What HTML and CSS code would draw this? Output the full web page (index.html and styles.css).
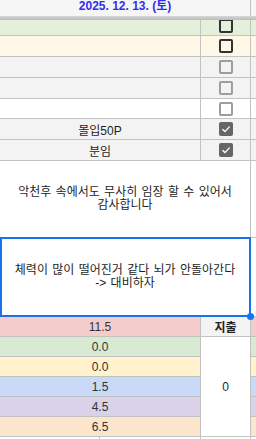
FILE: index.html
```html
<!DOCTYPE html>
<html lang="ko">

<head>
    <meta charset="UTF-8">
    <meta name="viewport" content="width=device-width, initial-scale=1.0">
    <title>Sheet</title>
    <link rel="stylesheet" href="styles.css">
</head>

<body>
    <div class="sheet">
        <!-- frozen header -->
        <div class="cell date">2025. 12. 13. (토)</div>
        <div class="cell head-edge"></div>
        <div class="freeze"></div>

        <!-- checklist rows -->
        <div class="cell green cut"></div>
        <div class="cell green cut box-cell"><span class="box dark"></span></div>
        <div class="cell green cut edge"></div>

        <div class="cell yellow"></div>
        <div class="cell yellow box-cell"><span class="box dark"></span></div>
        <div class="cell yellow edge"></div>

        <div class="cell grey"></div>
        <div class="cell grey box-cell"><span class="box"></span></div>
        <div class="cell grey edge"></div>

        <div class="cell grey"></div>
        <div class="cell grey box-cell"><span class="box"></span></div>
        <div class="cell grey edge"></div>

        <div class="cell"></div>
        <div class="cell box-cell"><span class="box"></span></div>
        <div class="cell edge"></div>

        <div class="cell grey">몰입50P</div>
        <div class="cell grey box-cell">
            <span class="box checked">
                <svg width="10" height="10" viewBox="0 0 10 10"><path d="M1.5 5.2 L4 7.6 L8.6 2.6" fill="none" stroke="#fff" stroke-width="1.4"/></svg>
            </span>
        </div>
        <div class="cell grey edge"></div>

        <div class="cell grey">분임</div>
        <div class="cell grey box-cell">
            <span class="box checked">
                <svg width="10" height="10" viewBox="0 0 10 10"><path d="M1.5 5.2 L4 7.6 L8.6 2.6" fill="none" stroke="#fff" stroke-width="1.4"/></svg>
            </span>
        </div>
        <div class="cell grey edge"></div>

        <!-- notes -->
        <div class="cell note">악천후 속에서도 무사히 임장 할 수 있어서<br>감사합니다</div>
        <div class="cell edge"></div>

        <div class="cell note selected">체력이 많이 떨어진거 같다 뇌가 안돌아간다<br>-&gt; 대비하자</div>
        <div class="cell edge"></div>

        <!-- totals -->
        <div class="cell red">11.5</div>
        <div class="cell label">지출</div>
        <div class="cell red edge"></div>

        <div class="cell mint">0.0</div>
        <div class="cell total">0</div>
        <div class="cell mint edge"></div>

        <div class="cell cream">0.0</div>
        <div class="cell cream edge"></div>

        <div class="cell blue">1.5</div>
        <div class="cell blue edge"></div>

        <div class="cell purple">4.5</div>
        <div class="cell purple edge"></div>

        <div class="cell peach">6.5</div>
        <div class="cell peach edge"></div>

        <div class="cell half"></div>
        <div class="cell half"></div>
        <div class="cell half"></div>
        <div class="cell edge"></div>
    </div>
</body>

</html>
```

FILE: styles.css
```css
html, body {
    margin: 0;
    padding: 0;
    background: white;
    overflow: hidden;
}

body {
    font-family: "Liberation Sans", "Noto Sans CJK KR", sans-serif;
    font-size: 12px;
    color: #1e1e1e;
    height: 439px;
}

.sheet {
    display: grid;
    grid-template-columns: 100px 101px 50px 1fr;
    grid-template-rows: 16px 4px 16px 21px 21px 21px 20px 21px 21px 77px 79px repeat(6, 20px) 20px;
}

.cell {
    grid-column: span 2;
    box-sizing: border-box;
    border-right: 1px solid #c2c2c2;
    border-bottom: 1px solid #c2c2c2;
    display: flex;
    align-items: center;
    justify-content: center;
    overflow: hidden;
    white-space: nowrap;
}

.cell.edge,
.cell.box-cell,
.cell.label,
.cell.half,
.cell.head-edge {
    grid-column: span 1;
}

.cell.edge {
    border-right: none;
}

/* frozen header */
.date {
    grid-column: 1 / 4;
    background: #f6f6f6;
    border-bottom: none;
    color: #2f2ff0;
    font-weight: bold;
    align-items: flex-start;
    line-height: 13px;
}

.cell.head-edge {
    background: #f6f6f6;
    border-bottom: none;
    border-right: none;
}

.freeze {
    grid-column: 1 / -1;
    background: linear-gradient(#d6d6d6, #bcbcbc);
}

/* first row sits half under the frozen bar */
.cut {
    align-items: flex-end;
    padding-bottom: 2px;
}

/* row colours */
.green { background: #e4efdc; }
.yellow { background: #fff8e6; }
.grey { background: #f3f3f3; }
.red { background: #f4cccc; }
.mint { background: #d9ead3; }
.cream { background: #fff2cc; }
.blue { background: #c9daf8; }
.purple { background: #d9d2e9; }
.peach { background: #fce5cd; }

/* checkboxes */
.box {
    width: 14px;
    height: 14px;
    box-sizing: border-box;
    border: 2px solid #9d9d9d;
    border-radius: 2px;
    flex-shrink: 0;
}

.box.dark {
    border-color: #333;
}

.box.checked {
    border: none;
    background: #666;
    display: flex;
    align-items: center;
    justify-content: center;
}

/* notes */
.note {
    grid-column: 1 / 4;
    text-align: center;
    line-height: 13px;
    word-spacing: 1px;
}

.note.selected {
    position: relative;
    overflow: visible;
    border-bottom-color: #1a73e8;
}

.note.selected::before {
    content: "";
    position: absolute;
    left: 0;
    right: -1px;
    top: -1px;
    bottom: -1px;
    border: 2px solid #1a73e8;
}

.note.selected::after {
    content: "";
    position: absolute;
    right: -4px;
    bottom: -4px;
    width: 7px;
    height: 7px;
    border-radius: 50%;
    background: #1a73e8;
    z-index: 2;
}

/* totals */
.label {
    background: #f3f3f3;
    font-weight: bold;
    color: #222;
}

.total {
    grid-column: 3 / 4;
    grid-row: span 5;
    background: white;
}

.red, .mint, .cream, .blue, .purple, .peach {
    color: #333;
}
```
